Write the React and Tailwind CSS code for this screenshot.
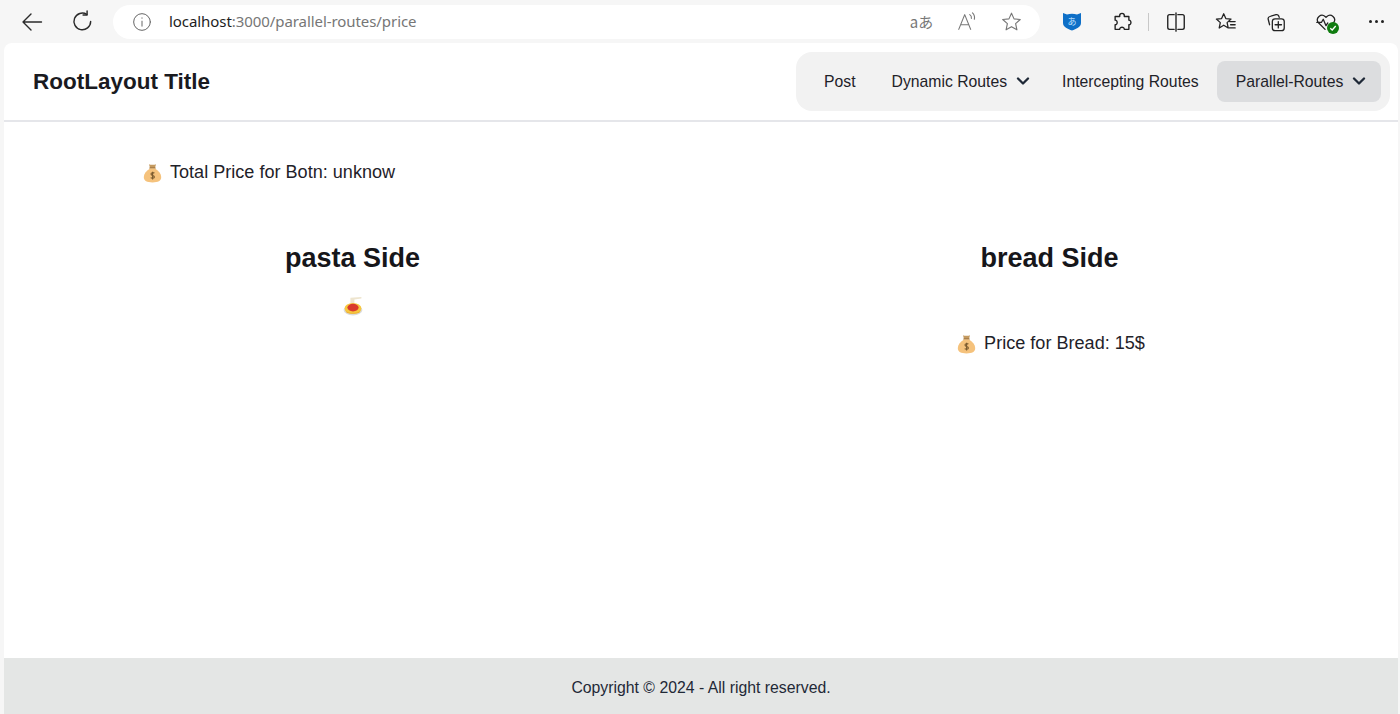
const Cell = ({ children, className = "" }) => (
  <div className={"w-[50px] h-full shrink-0 flex items-center justify-center " + className}>{children}</div>
);

const Stroke = ({ size = 22, color = "#2b2b2b", width = 1.4, children, vb = 24 }) => (
  <svg width={size} height={size} viewBox={`0 0 ${vb} ${vb}`} fill="none" stroke={color} strokeWidth={width} strokeLinecap="round" strokeLinejoin="round">
    {children}
  </svg>
);

const Chevron = () => (
  <svg width="14" height="9" viewBox="0 0 14 9" fill="none" stroke="#1f2937" strokeWidth="2.3" strokeLinecap="round" strokeLinejoin="round" className="ml-[9px]">
    <path d="M2 1.5 L7 6.5 L12 1.5" />
  </svg>
);

const MoneyBag = () => (
  <svg width="19" height="20" viewBox="0 0 19 20">
    <path d="M6 1.2 C7.5 2 11.5 2 13 1.2 L12 5 H7 Z" fill="#c49a60" />
    <rect x="6.4" y="4.2" width="6.2" height="1.6" rx="0.6" fill="#a27a44" />
    <path d="M7 5.6 C3 8 .8 11 .8 14 C.8 18 4 19.4 9.5 19.4 C15 19.4 18.2 18 18.2 14 C18.2 11 16 8 12 5.6 Z" fill="#f5c27c" />
    <path d="M11.4 10.2 C10.6 9.4 8 9.4 8 11 C8 12.8 11.4 12.1 11.4 14 C11.4 15.6 8.6 15.6 7.7 14.7 M9.6 8.8 V16.4" fill="none" stroke="#7a5a2e" strokeWidth="1.1" />
  </svg>
);

const Pasta = () => (
  <svg width="20" height="20" viewBox="0 0 20 20">
    <path d="M7.4 9 L7.4 1.8 L18.4 1 L18.4 2.6 L11.4 3.4 L11.4 9 Z" fill="#eee5cf" />
    <ellipse cx="10" cy="14" rx="9.4" ry="5.4" fill="#dcdcdc" />
    <ellipse cx="10" cy="12.4" rx="8.4" ry="5.4" fill="#f7c83f" />
    <ellipse cx="10" cy="11.6" rx="5.6" ry="3.8" fill="#d93a2e" />
    <path d="M2.4 14.5 C5 17.6 15 17.6 17.6 14.5 L16.4 16.8 C13 18.2 7 18.2 3.6 16.8 Z" fill="#eeb234" />
  </svg>
);

const NavItem = ({ children, active, chevron, className = "" }) => (
  <div className={`h-[41px] flex items-center rounded-lg pt-[1px] ${active ? "bg-[#dcdddf]" : ""} ${className}`}>
    <span>{children}</span>
    {chevron && <Chevron />}
  </div>
);

export default function App() {
  return (
    <div className="h-[714px] w-full overflow-hidden bg-[#f6f6f6] flex flex-col font-['Liberation_Sans',Arial,sans-serif] text-[#1f2229]">
      <div className="h-[43px] shrink-0 flex items-center pl-[7px]">
        <Cell>
          <Stroke size={24}>
            <path d="M21.5 12 H3 M11 4 L3 12 L11 20" />
          </Stroke>
        </Cell>
        <Cell>
          <Stroke size={23} width={1.5}>
            <path d="M20.5 12 A8.7 8.7 0 1 1 16.5 4.6" />
            <path d="M16.8 1 V5.3 H12.6" />
          </Stroke>
        </Cell>
        <div className="ml-[6px] w-[927px] h-[34px] shrink-0 rounded-full bg-white flex items-center pl-[19px]">
          <Stroke size={20} color="#666" width={1.2}>
            <circle cx="12" cy="12" r="10" />
            <path d="M12 11 V17 M12 7 V7.5" />
          </Stroke>
          <span className="ml-[17px] text-[15px] tracking-[-0.07px] font-['Noto_Sans',sans-serif] text-[#1d1d1d]">
            localhost<span className="text-[#767676]">:3000/parallel-routes/price</span>
          </span>
          <div className="ml-auto flex items-center h-full">
            <div className="w-[45px] flex justify-center">
              <span className="text-[15px] leading-none text-[#777] font-['Noto_Sans_CJK_JP','Noto_Sans',sans-serif]">aあ</span>
            </div>
            <div className="w-[45px] flex justify-center">
              <Stroke size={22} color="#777" width={1.2}>
                <path d="M3 20 L9.5 4 L16 20 M5.2 15 H13.8 M15 4 C16.5 5 17 6.5 16.8 8 M18 2 C20 4 20.6 6.5 20 9" />
              </Stroke>
            </div>
            <div className="w-[45px] flex justify-center">
              <Stroke size={21} color="#777" width={1.3}>
                <path d="M12 2.5 L14.9 9 L22 9.7 L16.7 14.5 L18.2 21.5 L12 17.9 L5.8 21.5 L7.3 14.5 L2 9.7 L9.1 9 Z" />
              </Stroke>
            </div>
            <div className="w-[6px]" />
          </div>
        </div>
        <div className="w-[7px] shrink-0" />
        <Cell>
          <svg width="20" height="19" viewBox="0 0 20 19">
            <path d="M1 1 L5 2.5 C8 1.6 12 1.6 15 2.5 L19 1 L19 11 C19 15 14 17 10 18.6 C6 17 1 15 1 11 Z" fill="#0e6fc7" />
            <text x="10" y="12.5" textAnchor="middle" fontSize="9" fill="#bfe0ff" fontFamily="'Noto Sans CJK JP',sans-serif">あ</text>
          </svg>
        </Cell>
        <Cell>
          <Stroke size={22} color="#222" width={1.5}>
            <path d="M9.5 5 C9.5 1.8 14.5 1.8 14.5 5 L14.5 6 L19.5 6 L19.5 10 C22.5 9.8 22.5 15.2 19.5 15 L19.5 20 L14.5 20 C14.7 17 9.3 17 9.5 20 L4.5 20 L4.5 15 C7.5 15.2 7.5 9.8 4.5 10 L4.5 6 L9.5 6 Z" />
          </Stroke>
        </Cell>
        <div className="w-[1px] h-[18px] bg-[#c8c8c8] shrink-0 ml-[1px] mr-[2px]" />
        <Cell>
          <Stroke size={22} color="#222" width={1.5}>
            <path d="M10 4 H5 A2 2 0 0 0 3 6 V18 A2 2 0 0 0 5 20 H10 M14 4 H19 A2 2 0 0 1 21 6 V18 A2 2 0 0 1 19 20 H14 M12 2 V22" />
          </Stroke>
        </Cell>
        <Cell>
          <Stroke size={22} color="#222" width={1.4}>
            <path d="M9.5 3 L11.8 8.3 L17.5 8.8 L13.2 12.7 L14.4 18.5 L9.5 15.5 L4.6 18.5 L5.8 12.7 L1.5 8.8 L7.2 8.3 Z M16 11.5 H22 M17 15 H22 M15.5 18.5 H22" />
          </Stroke>
        </Cell>
        <Cell>
          <Stroke size={22} color="#222" width={1.4}>
            <path d="M5 15 L3.5 9 A2.5 2.5 0 0 1 5.3 6 L12 4 A2.5 2.5 0 0 1 15 5.5 L15.5 7" />
            <rect x="8" y="8.5" width="13" height="13" rx="3" />
            <path d="M14.5 11.5 V18.5 M11 15 H18" />
          </Stroke>
        </Cell>
        <Cell className="relative">
          <Stroke size={22} color="#222" width={1.4}>
            <path d="M11 20 L3.5 12.5 A5 5 0 0 1 11 6 L12 7 L13 6 A5 5 0 0 1 20.5 12.5 L19.5 13.5 M2 12.5 H7 L9 9 L12 16 L14 13" />
          </Stroke>
          <span className="absolute left-[26px] top-[22px] w-[12px] h-[12px] rounded-full bg-[#107c10] flex items-center justify-center">
            <svg width="8" height="8" viewBox="0 0 8 8" fill="none" stroke="#fff" strokeWidth="1.3"><path d="M1.3 4.3 L3.2 6 L6.7 2" /></svg>
          </span>
        </Cell>
        <Cell>
          <div className="flex gap-[3px]">
            <span className="w-[3px] h-[3px] rounded-full bg-[#222]" />
            <span className="w-[3px] h-[3px] rounded-full bg-[#222]" />
            <span className="w-[3px] h-[3px] rounded-full bg-[#222]" />
          </div>
        </Cell>
      </div>

      <div className="flex-1 ml-[4px] mr-[2px] bg-white rounded-tl-lg rounded-tr-lg flex flex-col min-h-0">
        <header className="h-[79px] shrink-0 border-b-2 border-[#e5e6ea] flex items-center justify-between pl-[29px] pr-[8px]">
          <h1 className="text-[22.5px] font-bold text-[#1a1a1f]">RootLayout Title</h1>
          <nav className="h-[59px] w-[594px] -mt-[1px] rounded-2xl bg-[#f2f2f2] flex items-center text-[15.75px] pl-[28px]">
            <NavItem className="mr-[36px]">Post</NavItem>
            <NavItem chevron className="mr-[32px]">Dynamic Routes</NavItem>
            <NavItem className="mr-[18px]">Intercepting Routes</NavItem>
            <NavItem active chevron className="pl-[19px] pr-[15px]">Parallel-Routes</NavItem>
          </nav>
        </header>

        <main className="flex-1 min-h-0 pt-[40px]">
          <div className="flex items-center gap-[8px] pl-[139px] h-[22px] text-[18.08px]">
            <MoneyBag />
            <span>Total Price for Botn: unknow</span>
          </div>
          <div className="grid grid-cols-2 mt-[56px]">
            <section className="flex flex-col items-center">
              <h2 className="text-[27px] leading-[36px] font-bold text-[#16161a]">pasta Side</h2>
              <div className="mt-[20px]"><Pasta /></div>
            </section>
            <section className="flex flex-col items-center">
              <h2 className="text-[27px] leading-[36px] font-bold text-[#16161a]">bread Side</h2>
              <div className="mt-[57px] flex items-center gap-[8px] h-[22px] text-[18.08px] pl-[3px]">
                <MoneyBag />
                <span>Price for Bread: 15$</span>
              </div>
            </section>
          </div>
        </main>

        <footer className="h-[56px] shrink-0 bg-[#e4e6e5] flex items-center justify-center pt-[3px] text-[15.8px] text-[#1f2937]">
          Copyright © 2024 - All right reserved.
        </footer>
      </div>
    </div>
  );
}
